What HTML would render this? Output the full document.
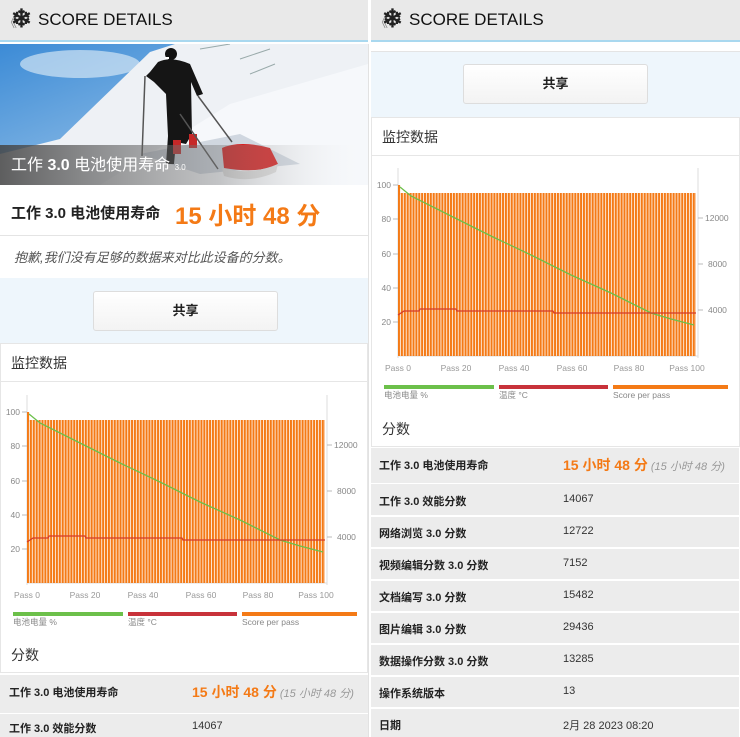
<!DOCTYPE html>
<html><head><meta charset="utf-8">
<style>
*{margin:0;padding:0;box-sizing:border-box}
body{width:740px;height:737px;overflow:hidden;background:#fff;font-family:"Liberation Sans","Noto Sans CJK SC",sans-serif;position:relative}
.p{position:absolute;top:0;width:368px;height:737px;overflow:hidden;background:#fff}
.hd{position:absolute;left:0;top:0;width:368px;height:42px;background:#e9e9e9;border-bottom:2px solid #a9d8ef}
.hd .t{position:absolute;left:38px;top:10px;font-size:17px;color:#111}
.hd .c{position:absolute;left:4px;top:12px;font-size:13px;color:#888}
.hd .s{position:absolute;left:11px;top:6px;font-size:25px;font-weight:bold;color:#222;line-height:26px}
.abs{position:absolute}
.blue{background:#eef6fc}
.btn{position:absolute;width:185px;height:40px;border:1px solid #ddd;border-radius:3px;background:linear-gradient(#fff,#f3f3f3);text-align:center;line-height:38px;font-size:13px;font-weight:bold;color:#222}
.card{position:absolute;left:0;width:368px;background:#fff;border:1px solid #e6e6e6}
.row{position:absolute;left:0;width:368px;background:#ececec;font-size:11px;font-weight:bold;color:#222}
.row .v{position:absolute;left:192px;font-weight:normal;color:#333}
.org{color:#f47a16}
</style></head><body>

<!-- LEFT PANEL -->
<div class="p" style="left:0">
  <div class="hd"><span class="c">《</span><span class="s">❄</span><span class="t">SCORE DETAILS</span></div>
  <svg class="abs" style="left:0;top:44px" width="368" height="141">
    <defs>
      <linearGradient id="sky" x1="0" y1="0" x2="1" y2="1"><stop offset="0" stop-color="#3c8bd6"/><stop offset="1" stop-color="#bcd8ef"/></linearGradient>
      <linearGradient id="ov" x1="0" y1="0" x2="1" y2="0"><stop offset="0" stop-color="#444" stop-opacity=".85"/><stop offset=".6" stop-color="#777" stop-opacity=".4"/><stop offset="1" stop-color="#fff" stop-opacity="0"/></linearGradient>
    </defs>
    <rect width="368" height="141" fill="url(#sky)"/>
    <ellipse cx="80" cy="20" rx="60" ry="14" fill="#e8f1f8" opacity=".6"/>
    <path d="M0 110 L60 95 L150 8 L175 0 L368 0 L368 141 L0 141Z" fill="#eef1f5"/>
    <path d="M100 141 L230 60 L368 20 L368 141Z" fill="#f6f8fb"/>
    <path d="M200 5 L230 0 M240 15 L270 5 M250 30 L275 20" stroke="#9aa" stroke-width="1"/>
    <path d="M140 110 L240 90 L300 120 L200 130Z" fill="#aab6c6" opacity=".5"/>
    <ellipse cx="171" cy="10" rx="6" ry="6" fill="#111"/>
    <rect x="165" y="13" width="4" height="2" fill="#fff"/>
    <path d="M158 18 Q171 12 190 20 L203 50 L197 52 L191 38 L192 90 L186 100 L176 98 L174 120 L166 120 L168 92 L166 50 L154 38 L146 32 L150 28Z" fill="#151515"/>
    <rect x="173" y="96" width="8" height="14" fill="#c62828"/>
    <rect x="189" y="90" width="8" height="14" fill="#c62828"/>
    <path d="M145 32 L142 112 M198 52 L232 98 M180 70 L218 125" stroke="#555" stroke-width="1.5"/>
    <path d="M222 104 Q240 96 270 104 L278 120 Q260 130 224 124Z" fill="#d42020"/>
    <path d="M222 124 Q250 132 278 120 L276 128 Q250 140 224 132Z" fill="#ddd"/>
    <rect x="0" y="101" width="368" height="40" fill="url(#ov)"/>
    <text x="11" y="126" font-size="16" fill="#fff" font-family="Liberation Sans,Noto Sans CJK SC,sans-serif">工作 <tspan font-weight="bold">3.0</tspan> 电池使用寿命 <tspan font-size="8">3.0</tspan></text>
  </svg>
  <div class="abs" style="left:0;top:185px;width:368px;height:51px;border-bottom:1px solid #e4e4e4">
    <span class="abs" style="left:11px;top:17px;font-size:15px;font-weight:bold;color:#222">工作 3.0 电池使用寿命</span>
    <span class="abs org" style="left:175px;top:11px;font-size:24px;font-weight:bold">15 小时 48 分</span>
  </div>
  <div class="abs" style="left:14px;top:247px;font-size:13px;font-style:italic;color:#555">抱歉,我们没有足够的数据来对比此设备的分数。</div>
  <div class="abs blue" style="left:0;top:278px;width:368px;height:65px"></div>
  <div class="btn" style="left:93px;top:291px">共享</div>
  <div class="card" style="top:343px;height:330px">
    <div class="abs" style="left:10px;top:9px;font-size:14px;color:#333">监控数据</div>
    <div class="abs" style="left:0;top:37px;width:368px;height:1px;background:#e6e6e6"></div>
    <div class="abs" style="left:10px;top:301px;font-size:14px;color:#333">分数</div>
  </div>
  <svg class="abs" style="left:0;top:395px" width="368" height="232">
  <defs><pattern id="pa" x="27" y="0" width="2.89" height="230" patternUnits="userSpaceOnUse"><rect x="0" y="0" width="2.1" height="230" fill="#f47a16"/></pattern></defs>
  <line x1="27" y1="0" x2="27" y2="190" stroke="#ddd"/>
  <line x1="327" y1="0" x2="327" y2="190" stroke="#ddd"/>
  <line x1="27" y1="188" x2="327" y2="188" stroke="#ddd"/>
  <rect x="27" y="25" width="298" height="163" fill="url(#pa)"/>
  <rect x="27" y="17" width="2.1" height="10" fill="#f47a16"/>
  <polyline points="29,19 40,28 80,48 120,68 160,87 200,107 240,125 280,145 300,151 323,157" fill="none" stroke="#6cc04a" stroke-width="1.3"/>
  <polyline points="27,147 33,143 48,143 49,141 85,141 86,143 182,143 183,145 325,145" fill="none" stroke="#d43a2a" stroke-width="1.3"/>
  <g font-size="8.5" fill="#888" font-family="Liberation Sans,sans-serif" text-anchor="end">
    <text x="20" y="20">100</text><text x="20" y="54">80</text><text x="20" y="89">60</text><text x="20" y="123">40</text><text x="20" y="157">20</text>
  </g>
  <g stroke="#bbb"><line x1="22" y1="17" x2="27" y2="17"/><line x1="22" y1="51" x2="27" y2="51"/><line x1="22" y1="86" x2="27" y2="86"/><line x1="22" y1="120" x2="27" y2="120"/><line x1="22" y1="154" x2="27" y2="154"/>
  <line x1="327" y1="50" x2="332" y2="50"/><line x1="327" y1="96" x2="332" y2="96"/><line x1="327" y1="142" x2="332" y2="142"/></g>
  <g font-size="8.5" fill="#888" font-family="Liberation Sans,sans-serif">
    <text x="334" y="53">12000</text><text x="337" y="99">8000</text><text x="337" y="145">4000</text>
  </g>
  <g font-size="8.5" fill="#999" font-family="Liberation Sans,sans-serif" text-anchor="middle">
    <text x="27" y="203">Pass 0</text><text x="85" y="203">Pass 20</text><text x="143" y="203">Pass 40</text><text x="201" y="203">Pass 60</text><text x="258" y="203">Pass 80</text><text x="316" y="203">Pass 100</text>
  </g>
  <rect x="13" y="217" width="110" height="4" fill="#6cc04a"/>
  <rect x="128" y="217" width="109" height="4" fill="#c8323a"/>
  <rect x="242" y="217" width="115" height="4" fill="#f47a16"/>
  <g font-size="8.5" fill="#888" font-family="Liberation Sans,Noto Sans CJK SC,sans-serif">
    <text x="13" y="230">电池电量 %</text><text x="128" y="230">温度 °C</text><text x="242" y="230">Score per pass</text>
  </g>
  </svg>
  <div class="row" style="top:675px;height:38px"><span class="abs" style="left:9px;top:9px">工作 3.0 电池使用寿命</span><span class="v" style="top:7px"><b class="org" style="font-size:14px">15 小时 48 分</b> <i style="color:#999">(15 小时 48 分)</i></span></div>
  <div class="row" style="top:714px;height:30px"><span class="abs" style="left:9px;top:6px">工作 3.0 效能分数</span><span class="v" style="top:6px">14067</span></div>
</div>
<div class="abs" style="left:368px;top:44px;width:1px;height:693px;background:#e2e2e2"></div>

<!-- RIGHT PANEL -->
<div class="p" style="left:371px;width:369px">
  <div class="hd" style="width:369px"><span class="c">《</span><span class="s">❄</span><span class="t">SCORE DETAILS</span></div>
  <div class="abs" style="left:0;top:51px;width:369px;height:1px;background:#e4e4e4"></div>
  <div class="abs blue" style="left:0;top:52px;width:369px;height:65px"></div>
  <div class="btn" style="left:92px;top:64px">共享</div>
  <div class="card" style="top:117px;height:330px;width:369px">
    <div class="abs" style="left:10px;top:9px;font-size:14px;color:#333">监控数据</div>
    <div class="abs" style="left:0;top:37px;width:369px;height:1px;background:#e6e6e6"></div>
    <div class="abs" style="left:10px;top:301px;font-size:14px;color:#333">分数</div>
  </div>
  <svg class="abs" style="left:0;top:168px" width="368" height="232">
  <defs><pattern id="pb" x="27" y="0" width="2.89" height="230" patternUnits="userSpaceOnUse"><rect x="0" y="0" width="2.1" height="230" fill="#f47a16"/></pattern></defs>
  <line x1="27" y1="0" x2="27" y2="190" stroke="#ddd"/>
  <line x1="327" y1="0" x2="327" y2="190" stroke="#ddd"/>
  <line x1="27" y1="188" x2="327" y2="188" stroke="#ddd"/>
  <rect x="27" y="25" width="298" height="163" fill="url(#pb)"/>
  <rect x="27" y="17" width="2.1" height="10" fill="#f47a16"/>
  <polyline points="29,19 40,28 80,48 120,68 160,87 200,107 240,125 280,145 300,151 323,157" fill="none" stroke="#6cc04a" stroke-width="1.3"/>
  <polyline points="27,147 33,143 48,143 49,141 85,141 86,143 182,143 183,145 325,145" fill="none" stroke="#d43a2a" stroke-width="1.3"/>
  <g font-size="8.5" fill="#888" font-family="Liberation Sans,sans-serif" text-anchor="end">
    <text x="20" y="20">100</text><text x="20" y="54">80</text><text x="20" y="89">60</text><text x="20" y="123">40</text><text x="20" y="157">20</text>
  </g>
  <g stroke="#bbb"><line x1="22" y1="17" x2="27" y2="17"/><line x1="22" y1="51" x2="27" y2="51"/><line x1="22" y1="86" x2="27" y2="86"/><line x1="22" y1="120" x2="27" y2="120"/><line x1="22" y1="154" x2="27" y2="154"/>
  <line x1="327" y1="50" x2="332" y2="50"/><line x1="327" y1="96" x2="332" y2="96"/><line x1="327" y1="142" x2="332" y2="142"/></g>
  <g font-size="8.5" fill="#888" font-family="Liberation Sans,sans-serif">
    <text x="334" y="53">12000</text><text x="337" y="99">8000</text><text x="337" y="145">4000</text>
  </g>
  <g font-size="8.5" fill="#999" font-family="Liberation Sans,sans-serif" text-anchor="middle">
    <text x="27" y="203">Pass 0</text><text x="85" y="203">Pass 20</text><text x="143" y="203">Pass 40</text><text x="201" y="203">Pass 60</text><text x="258" y="203">Pass 80</text><text x="316" y="203">Pass 100</text>
  </g>
  <rect x="13" y="217" width="110" height="4" fill="#6cc04a"/>
  <rect x="128" y="217" width="109" height="4" fill="#c8323a"/>
  <rect x="242" y="217" width="115" height="4" fill="#f47a16"/>
  <g font-size="8.5" fill="#888" font-family="Liberation Sans,Noto Sans CJK SC,sans-serif">
    <text x="13" y="230">电池电量 %</text><text x="128" y="230">温度 °C</text><text x="242" y="230">Score per pass</text>
  </g>
  </svg>
  <div class="row" style="top:448px;height:35px"><span class="abs" style="left:8px;top:9px">工作 3.0 电池使用寿命</span><span class="v" style="left:192px;top:7px"><b class="org" style="font-size:14px">15 小时 48 分</b> <i style="color:#999">(15 小时 48 分)</i></span></div>
  <div class="row" style="top:484px;height:31px"><span class="abs" style="left:8px;top:9px">工作 3.0 效能分数</span><span class="v" style="top:9px">14067</span></div>
  <div class="row" style="top:517px;height:30px"><span class="abs" style="left:8px;top:8px">网络浏览 3.0 分数</span><span class="v" style="top:8px">12722</span></div>
  <div class="row" style="top:549px;height:30px"><span class="abs" style="left:8px;top:8px">视频编辑分数 3.0 分数</span><span class="v" style="top:8px">7152</span></div>
  <div class="row" style="top:581px;height:30px"><span class="abs" style="left:8px;top:8px">文档编写 3.0 分数</span><span class="v" style="top:8px">15482</span></div>
  <div class="row" style="top:613px;height:30px"><span class="abs" style="left:8px;top:8px">图片编辑 3.0 分数</span><span class="v" style="top:8px">29436</span></div>
  <div class="row" style="top:645px;height:30px"><span class="abs" style="left:8px;top:8px">数据操作分数 3.0 分数</span><span class="v" style="top:8px">13285</span></div>
  <div class="row" style="top:677px;height:30px"><span class="abs" style="left:8px;top:8px">操作系统版本</span><span class="v" style="top:8px">13</span></div>
  <div class="row" style="top:709px;height:30px"><span class="abs" style="left:8px;top:8px">日期</span><span class="v" style="top:8px">2月 28 2023 08:20</span></div>
</div>
</body></html>
